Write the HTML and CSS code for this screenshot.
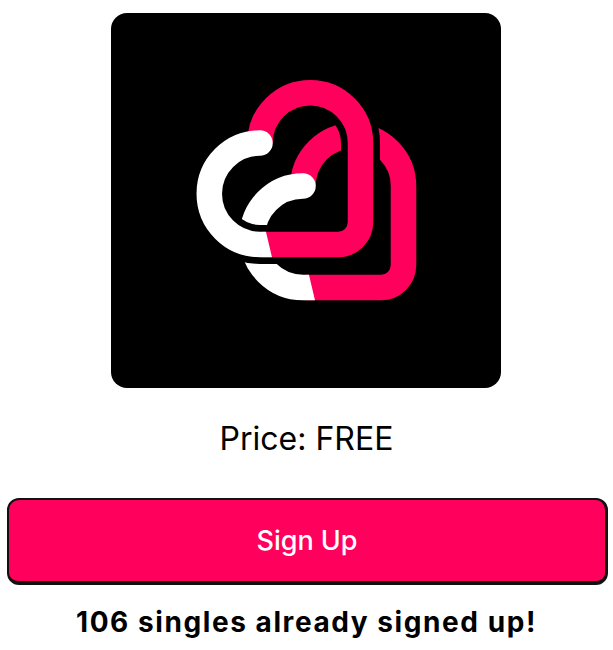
FILE: index.html
```html
<!DOCTYPE html>
<html lang="en">
<head>
    <meta charset="UTF-8">
    <meta name="viewport" content="width=device-width, initial-scale=1.0">
    <title>Sign Up</title>
    <link rel="stylesheet" href="styles.css">
</head>
<body>
    <div class="container">
        <svg class="logo" viewBox="111 13 390 375" aria-label="Logo">
            <defs>
                <clipPath id="whitePart">
                    <polygon points="150,60 320,60 320,200 262,215 275,270 150,270"/>
                </clipPath>
                <g id="heart" fill="none" stroke-width="25.5">
                    <path stroke="#ff005c" d="M260 143 A50.25 50.25 0 0 1 360.5 143 V222 A22.5 22.5 0 0 1 338 244.5 H262"/>
                    <path stroke="#fff" stroke-linecap="round" clip-path="url(#whitePart)" d="M260 143 A50.75 50.75 0 0 0 260 244.5 H285"/>
                </g>
            </defs>
            <g class="logo-mark">
                <use href="#heart" transform="translate(43 43)"/>
                <!-- black halo separates the two hearts -->
                <path fill="none" stroke="#000" stroke-width="39" d="M260 143 A50.25 50.25 0 0 1 360.5 143 V222 A22.5 22.5 0 0 1 338 244.5 H260 A50.75 50.75 0 0 1 260 143"/>
                <use href="#heart"/>
            </g>
        </svg>

        <p class="price">Price: FREE</p>
        <button class="signup-btn">Sign Up</button>
        <p class="count">106 singles already signed up!</p>
    </div>
</body>
</html>
```

FILE: styles.css
```css
body {
    margin: 0;
    background-color: #ffffff;
    color: #000000;
    font-family: Inter, sans-serif;
}
.container {
    display: flex;
    flex-direction: column;
    align-items: center;
    padding: 13px 7px 0 5px;
}
.logo {
    display: block;
    flex-shrink: 0;
    width: 390px;
    height: 375px;
    background-color: #000000;
    border-radius: 16px;
}
.logo-mark {
    filter: blur(0.5px);
}
.price {
    margin: 33px 0 0 2px;
    font-size: 32px;
    line-height: 36px;
}
.signup-btn {
    align-self: flex-start;
    width: 601px;
    height: 87px;
    margin: 41px 0 0 2px;
    background-color: #ff005c;
    color: #ffffff;
    font-family: inherit;
    font-size: 27px;
    font-weight: 500;
    border: 2px solid #111111;
    border-right-width: 3px;
    border-bottom-width: 4px;
    border-radius: 12px;
    cursor: pointer;
}
.count {
    margin: 20px 0 0 2px;
    font-size: 28px;
    line-height: 34px;
    font-weight: 700;
    letter-spacing: 1.57px;
}
```
